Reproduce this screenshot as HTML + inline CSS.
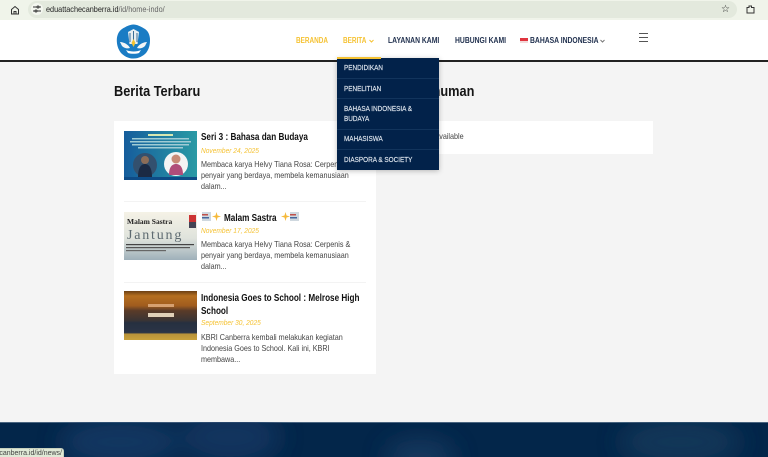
<!DOCTYPE html>
<html lang="id"><head><meta charset="utf-8"><title>Home</title>
<style>
html,body{margin:0;padding:0;width:768px;height:457px;overflow:hidden;background:#f4f4f4;font-family:"Liberation Sans",sans-serif}
.a{position:absolute;white-space:nowrap}
#p{position:relative;width:768px;height:457px;overflow:hidden}
.nav{font-size:8px;font-weight:700;top:36px;line-height:10px;transform:scaleX(.85);transform-origin:0 0}
.y{transform:scaleX(.8)}
.dd{font-size:7.5px;color:#dfe6ee;left:344px;line-height:10px;font-weight:400;-webkit-text-stroke:.15px #dfe6ee;transform:scaleX(.85);transform-origin:0 0}
.sep{left:337px;width:102px;height:1px;background:#12345c}
.t{font-size:10px;font-weight:700;color:#111;left:201px;line-height:13px;transform:scaleX(.815);transform-origin:0 0}
.d{font-size:7.5px;font-style:italic;color:#f5c233;left:201px;line-height:10px;transform:scaleX(.88);transform-origin:0 0}
.x{font-size:8.4px;color:#444;left:201px;line-height:11.2px;transform:scaleX(.86);transform-origin:0 0}
.h{font-size:14.5px;font-weight:700;line-height:17px;color:#151515;top:84px;transform:scaleX(.88);transform-origin:0 0}
</style></head><body><div id="p">
<!-- browser bar -->
<div class="a" style="left:0;top:0;width:768px;height:20px;background:#f0f4ea"></div>
<div class="a" style="left:28px;top:1px;width:709px;height:17px;border-radius:9px;background:#e3e9dd"></div>
<div class="a" style="left:31px;top:3px;width:12px;height:12px;border-radius:50%;background:#f4f7f0"></div>
<svg class="a" style="left:10px;top:5px" width="10" height="10" viewBox="0 0 10 10" fill="none" stroke="#333" stroke-width="1"><path d="M1.5 4.5 5 1.5l3.5 3V9h-7z"/><path d="M4 9V6.5h2V9"/></svg>
<svg class="a" style="left:33px;top:5px" width="8" height="8" viewBox="0 0 8 8" stroke="#333" stroke-width="1"><path d="M0 2h4M6 2h2M0 6h2M4 6h4"/><circle cx="5" cy="2" r="1" fill="none"/><circle cx="3" cy="6" r="1" fill="none"/></svg>
<div class="a" style="left:46px;top:4px;font-size:8.1px;line-height:11px;color:#222;transform:scaleX(.9);transform-origin:0 0">eduattachecanberra.id<span style="color:#666">/id/home-indo/</span></div>
<div class="a" style="left:721px;top:3px;font-size:10px;line-height:13px;color:#222">☆</div>
<svg class="a" style="left:746px;top:5px" width="9" height="9" viewBox="0 0 9 9" fill="none" stroke="#333" stroke-width="1"><path d="M1 2.500h2V1h2.500v1.500H8V8H1z"/></svg>
<!-- header -->
<div class="a" style="left:0;top:20px;width:768px;height:40px;background:#fff"></div>
<div class="a" style="left:0;top:60px;width:768px;height:1.500px;background:#222"></div>
<svg class="a" style="left:116px;top:24px" width="35" height="35" viewBox="0 0 35 35">
<path d="M17.500 .5C21 .5 25 2.500 29 5c3 2 5 6 5 11 0 5-1 9-4 13-3 3-7 5.500-12.500 5.500S8 32 5 29C2 25 .8 21 .8 16 .8 11 3 7 6 5c4-2.500 8-4.500 11.500-4.500z" fill="#1a7cc4"/>
<path d="M12 8l5.500-3 5.500 3-1.500 12h-8z" fill="#e8eef2"/>
<path d="M14 9v9M17.500 7v11M21 9v9" stroke="#3a6d96" stroke-width="1"/>
<path d="M4 18c3 0 8 2 10 6-3 1-6 0-8-2zM31 18c-3 0-8 2-10 6 3 1 6 0 8-2z" fill="#f2f5f7"/>
<path d="M17.500 15l2 4-2 4-2-4z" fill="#f2c230"/>
<path d="M10 26c4 2 11 2 15 0l-2 3c-3 1-8 1-11 0z" fill="#fff"/>
</svg>
<div class="a nav y" style="left:296px;color:#f5c233">BERANDA</div>
<div class="a nav y" style="left:343px;color:#f5c233">BERITA</div>
<svg class="a" style="left:369px;top:39px" width="5" height="4" fill="none" stroke="#f5c233"><path d="M.5 1 2.500 3 4.500 1"/></svg>
<div class="a nav" style="left:388px;color:#1f2f4d">LAYANAN KAMI</div>
<div class="a nav" style="left:455px;color:#1f2f4d">HUBUNGI KAMI</div>
<div class="a" style="left:520px;top:38px;width:8px;height:3px;background:#e0353f"></div>
<div class="a" style="left:520px;top:41px;width:8px;height:2px;background:#f2dada"></div>
<div class="a nav" style="left:530px;color:#1f2f4d">BAHASA INDONESIA</div>
<svg class="a" style="left:600px;top:39px" width="5" height="4" fill="none" stroke="#777"><path d="M.5 1 2.500 3 4.500 1"/></svg>
<div class="a" style="left:639px;top:33px;width:9px;height:1.300px;background:#555"></div>
<div class="a" style="left:639px;top:37px;width:9px;height:1.300px;background:#555"></div>
<div class="a" style="left:639px;top:41px;width:9px;height:1.300px;background:#555"></div>
<!-- headings -->
<div class="a h" style="left:114px">Berita Terbaru</div>
<div class="a h" style="left:390px">Pengumuman</div>
<!-- announcement card -->
<div class="a" style="left:390px;top:121px;width:263px;height:33px;background:#fff"></div>
<div class="a x" style="left:422px;top:131px;line-height:11px">Not available</div>
<!-- news card -->
<div class="a" style="left:114px;top:121px;width:262px;height:253px;background:#fff"></div>
<svg class="a" style="left:124px;top:131px" width="73" height="49" viewBox="0 0 73 49">
<defs><linearGradient id="g" x1="0" x2="1" y1="0" y2="0"><stop offset="0" stop-color="#165d9c"/><stop offset="1" stop-color="#2a9aa5"/></linearGradient></defs>
<rect width="73" height="49" fill="url(#g)"/>
<rect x="24" y="3" width="25" height="2" fill="#d8e8b0"/>
<rect x="8" y="7" width="57" height="1.500" fill="#9fcbd4"/><rect x="6" y="10" width="61" height="1.500" fill="#9fcbd4"/><rect x="8" y="13" width="57" height="1.500" fill="#9fcbd4"/><rect x="14" y="16" width="45" height="1.500" fill="#9fcbd4"/>
<circle cx="21" cy="34" r="12" fill="#33506e"/><path d="M14 46c0-9 3-13 7-13s7 4 7 13z" fill="#1b2a44"/><circle cx="21" cy="29" r="4" fill="#8c6d58"/>
<circle cx="52" cy="33" r="12" fill="#f4f4f4"/><path d="M45 44c0-8 3-11 7-11s7 3 7 11z" fill="#b04d7a"/><circle cx="52" cy="28" r="4.500" fill="#c98a76"/>
<rect y="46" width="73" height="3" fill="#0e4b86"/>
</svg>
<div class="a t" style="top:131px">Seri 3 : Bahasa dan Budaya</div>
<div class="a d" style="top:146px">November 24, 2025</div>
<div class="a x" style="top:159px">Membaca karya Helvy Tiana Rosa: Cerpenis &amp;<br>penyair yang berdaya, membela kemanusiaan<br>dalam...</div>
<div class="a" style="left:124px;top:201px;width:242px;height:1px;background:#f3f3f3"></div>
<svg class="a" style="left:124px;top:212px" width="73" height="48" viewBox="0 0 73 48">
<defs><linearGradient id="h" x1="0" x2="0" y1="0" y2="1"><stop offset="0" stop-color="#f5f2e6"/><stop offset=".55" stop-color="#dfe3dc"/><stop offset="1" stop-color="#9eb0ba"/></linearGradient></defs>
<rect width="73" height="48" fill="url(#h)"/>
<text x="3" y="12" font-family="Liberation Serif" font-weight="700" font-size="7.500" fill="#222">Malam Sastra</text>
<text x="3" y="27" font-family="Liberation Serif" font-size="14" letter-spacing="1.800" fill="#5d6a70">Jantung</text>
<rect x="65" y="3" width="7" height="7" fill="#c33"/><rect x="65" y="10" width="7" height="6" fill="#445"/>
<rect x="2" y="32" width="68" height="1.200" fill="#444"/><rect x="2" y="35" width="64" height="1.200" fill="#555"/><rect x="2" y="38" width="40" height="1.200" fill="#666"/>
</svg>
<svg class="a" style="left:202px;top:212px" width="9" height="9"><rect width="9" height="9" fill="#cfd8df"/><rect y="2" width="6" height="1.500" fill="#c0504a"/><rect y="5" width="7" height="1.500" fill="#46689c"/></svg>
<svg class="a" style="left:212px;top:212px" width="9" height="9" viewBox="0 0 9 9"><path d="M4.500 0 5.500 3.500 9 4.500 5.500 5.500 4.500 9 3.500 5.500 0 4.500 3.500 3.500z" fill="#f5b93a"/></svg>
<div class="a t" style="top:212px;left:224px">Malam Sastra</div>
<svg class="a" style="left:281px;top:212px" width="9" height="9" viewBox="0 0 9 9"><path d="M4.500 0 5.500 3.500 9 4.500 5.500 5.500 4.500 9 3.500 5.500 0 4.500 3.500 3.500z" fill="#f5b93a"/></svg>
<svg class="a" style="left:290px;top:212px" width="9" height="9"><rect width="9" height="9" fill="#cfd8df"/><rect y="2" width="6" height="1.500" fill="#c0504a"/><rect y="5" width="7" height="1.500" fill="#46689c"/></svg>
<div class="a d" style="top:226px">November 17, 2025</div>
<div class="a x" style="top:239px">Membaca karya Helvy Tiana Rosa: Cerpenis &amp;<br>penyair yang berdaya, membela kemanusiaan<br>dalam...</div>
<div class="a" style="left:124px;top:282px;width:242px;height:1px;background:#f3f3f3"></div>
<svg class="a" style="left:124px;top:291px" width="73" height="49" viewBox="0 0 73 49">
<defs><linearGradient id="k" x1="0" x2="0" y1="0" y2="1"><stop offset="0" stop-color="#6b3f14"/><stop offset=".1" stop-color="#b56f20"/><stop offset=".3" stop-color="#a05c1e"/><stop offset=".4" stop-color="#5a3b28"/><stop offset=".6" stop-color="#3a3434"/><stop offset=".65" stop-color="#263040"/><stop offset=".85" stop-color="#2b3446"/><stop offset=".88" stop-color="#b8923a"/><stop offset="1" stop-color="#c9a23c"/></linearGradient></defs>
<rect width="73" height="49" fill="url(#k)"/>
<rect x="24" y="13" width="26" height="3" fill="#d6a070"/><rect x="24" y="22" width="26" height="4" fill="#e0d0b8"/>
</svg>
<div class="a t" style="top:292px">Indonesia Goes to School : Melrose High</div>
<div class="a t" style="top:305px">School</div>
<div class="a d" style="top:318px">September 30, 2025</div>
<div class="a x" style="top:332px">KBRI Canberra kembali melakukan kegiatan<br>Indonesia Goes to School. Kali ini, KBRI<br>membawa...</div>
<!-- dropdown -->
<div class="a" style="left:337px;top:58px;width:102px;height:112px;background:#02224a;box-shadow:0 1px 5px rgba(0,0,0,.25)"></div>
<div class="a" style="left:337px;top:57px;width:44px;height:2px;background:#f5c233"></div>
<div class="a dd" style="top:63px">PENDIDIKAN</div>
<div class="a sep" style="top:78px"></div>
<div class="a dd" style="top:84px">PENELITIAN</div>
<div class="a sep" style="top:98px"></div>
<div class="a dd" style="top:104px">BAHASA INDONESIA &amp;</div>
<div class="a dd" style="top:114px">BUDAYA</div>
<div class="a sep" style="top:129px"></div>
<div class="a dd" style="top:134px">MAHASISWA</div>
<div class="a sep" style="top:149px"></div>
<div class="a dd" style="top:155px">DIASPORA &amp; SOCIETY</div>
<!-- footer -->
<svg class="a" style="left:0;top:422px" width="768" height="35" viewBox="0 0 768 35">
<defs><filter id="b"><feGaussianBlur stdDeviation="12"/></filter></defs>
<rect width="768" height="35" fill="#03264a"/>
<rect width="768" height="1" fill="#4a6580"/>
<g filter="url(#b)" opacity=".8"><ellipse cx="120" cy="20" rx="60" ry="25" fill="#143a66"/><ellipse cx="230" cy="15" rx="50" ry="28" fill="#123763"/><ellipse cx="420" cy="35" rx="35" ry="18" fill="#1a3d63"/><ellipse cx="680" cy="20" rx="60" ry="25" fill="#173a5c"/></g>
</svg>
<div class="a" style="left:0;top:448px;width:64px;height:9px;background:#dfe9d6;border-top:1px solid #c6d0be;border-right:1px solid #c6d0be;border-top-right-radius:3px;box-sizing:border-box;font-size:7px;line-height:9px;color:#444;overflow:hidden"><span style="position:absolute;right:1px;top:0">hecanberra.id/id/news/</span></div>
</div></body></html>
